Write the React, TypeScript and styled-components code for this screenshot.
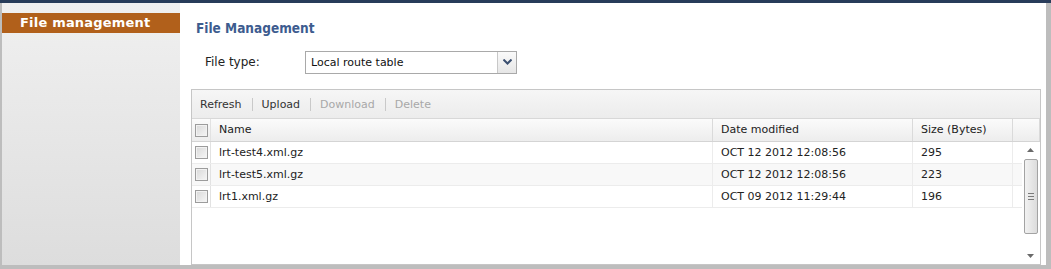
import React from "react";
import styled, { createGlobalStyle } from "styled-components";

const GlobalStyle = createGlobalStyle`
  html, body {
    margin: 0;
    padding: 0;
    background: #ffffff;
  }
  body {
    font-family: "DejaVu Sans", Verdana, sans-serif;
  }
`;

const Page = styled.div`
  width: 1051px;
  height: 269px;
  display: flex;
  flex-direction: column;
  background: #bdbdbd;
`;

const TopBar = styled.div`
  height: 3px;
  background: #283c5a;
  flex: none;
`;

const Body = styled.div`
  flex: 1;
  display: flex;
  margin: 0 5px 4px 2px;
  min-height: 0;
`;

const Sidebar = styled.div`
  width: 178px;
  flex: none;
  padding-top: 10px;
  background: linear-gradient(to bottom, #f0f0f0, #dddddd);
`;

const SideHeader = styled.div`
  height: 20px;
  line-height: 19px;
  padding-left: 18px;
  background: #b1601b;
  color: #ffffff;
  font-weight: bold;
  font-size: 13px;
  letter-spacing: 0.2px;
`;

const Main = styled.div`
  flex: 1;
  background: #ffffff;
  padding: 16px 5px 0 11px;
  display: flex;
  flex-direction: column;
  min-width: 0;
`;

const Title = styled.div`
  color: #3d5c8f;
  font-family: "DejaVu Sans Condensed", "DejaVu Sans", sans-serif;
  font-stretch: condensed;
  font-weight: bold;
  font-size: 13.5px;
  line-height: 18px;
  padding-left: 5px;
`;

const FormRow = styled.div`
  display: flex;
  align-items: center;
  margin-top: 14px;
  padding-left: 14px;
  height: 22px;
`;

const Label = styled.div`
  width: 100px;
  font-size: 12px;
  color: #222222;
`;

const Select = styled.div`
  width: 210px;
  height: 21px;
  border: 1px solid #a9a9a9;
  display: flex;
  background: #ffffff;
`;

const SelectValue = styled.div`
  flex: 1;
  font-size: 11px;
  line-height: 21px;
  padding-left: 5px;
  color: #111111;
`;

const SelectButton = styled.div`
  width: 18px;
  border-left: 1px solid #c8c8c8;
  background: linear-gradient(to bottom, #fafafa, #e6e6e6);
  display: flex;
  align-items: center;
  justify-content: center;
`;

const Grid = styled.div`
  margin-top: 16px;
  height: 174px;
  border: 1px solid #c6c6c6;
  display: flex;
  flex-direction: column;
  overflow: hidden;
`;

const Toolbar = styled.div`
  height: 28px;
  display: flex;
  align-items: center;
  padding-left: 8px;
  background: linear-gradient(to bottom, #f6f6f6, #ececec);
  border-bottom: 1px solid #d8d8d8;
  font-size: 11px;
`;

const ToolButton = styled.span<{ $disabled?: boolean }>`
  color: ${(p) => (p.$disabled ? "#a8a8a8" : "#333333")};
`;

const ToolSep = styled.span`
  width: 1px;
  height: 13px;
  background: #c9c9c9;
  margin: 0 9px 0 10px;
`;

const HeaderRow = styled.div`
  display: flex;
  height: 22px;
  background: linear-gradient(to bottom, #fbfbfb, #ededed);
  border-bottom: 1px solid #d4d4d4;
`;

const HeadCell = styled.div<{ $w?: number }>`
  ${(p) => (p.$w ? `width: ${p.$w}px; flex: none;` : "flex: 1;")}
  border-right: 1px solid #dadada;
  font-size: 11px;
  line-height: 22px;
  padding-left: 8px;
  color: #222222;
  box-sizing: border-box;
`;

const CheckCell = styled.div`
  width: 19px;
  flex: none;
  display: flex;
  align-items: center;
  justify-content: center;
  border-right: 1px solid #e2e2e2;
  box-sizing: border-box;
`;

const Content = styled.div`
  flex: 1;
  display: flex;
  min-height: 0;
`;

const Rows = styled.div`
  flex: 1;
`;

const Row = styled.div<{ $alt?: boolean }>`
  display: flex;
  height: 21px;
  border-bottom: 1px solid #ececec;
  background: ${(p) => (p.$alt ? "#f8f8f8" : "#ffffff")};
`;

const Cell = styled.div<{ $w: number }>`
  width: ${(p) => p.$w}px;
  flex: none;
  font-size: 11px;
  line-height: 21px;
  padding-left: 8px;
  color: #222222;
  border-right: 1px solid #ececec;
  box-sizing: border-box;
`;

const Check = styled.span`
  width: 11px;
  height: 11px;
  border: 1px solid #9c9c9c;
  background: linear-gradient(135deg, #d8d8d8, #f6f6f6);
  box-shadow: inset 0 0 0 1px #f2f2f2;
`;

const Scrollbar = styled.div`
  width: 17px;
  margin-right: 1px;
  display: flex;
  flex-direction: column;
  align-items: center;
  background: #ffffff;
`;

const Arrow = styled.div`
  height: 16px;
  display: flex;
  align-items: center;
  justify-content: center;
`;

const Thumb = styled.div`
  width: 14px;
  height: 75px;
  margin-top: 1px;
  border: 1px solid #a3a3a3;
  border-radius: 2px;
  background: linear-gradient(to right, #f2f2f2, #dcdcdc);
  display: flex;
  align-items: center;
  justify-content: center;
  box-sizing: border-box;
`;

const Spacer = styled.div`
  flex: 1;
`;

const files = [
  { name: "lrt-test4.xml.gz", date: "OCT 12 2012 12:08:56", size: "295" },
  { name: "lrt-test5.xml.gz", date: "OCT 12 2012 12:08:56", size: "223" },
  { name: "lrt1.xml.gz", date: "OCT 09 2012 11:29:44", size: "196" },
];

function Triangle({ up }: { up?: boolean }) {
  return (
    <svg width="7" height="4" viewBox="0 0 7 4">
      <path d={up ? "M0 4 L3.5 0 L7 4 Z" : "M0 0 L3.5 4 L7 0 Z"} fill="#6a6a6a" />
    </svg>
  );
}

export default function App() {
  return (
    <>
      <GlobalStyle />
      <Page>
        <TopBar />
        <Body>
          <Sidebar>
            <SideHeader>File management</SideHeader>
          </Sidebar>
          <Main>
            <Title>File Management</Title>
            <FormRow>
              <Label>File type:</Label>
              <Select>
                <SelectValue>Local route table</SelectValue>
                <SelectButton>
                  <svg width="9" height="6" viewBox="0 0 9 6">
                    <path d="M0.5 0.5 L4.5 4.5 L8.5 0.5" stroke="#3b4f70" strokeWidth="2" fill="none" />
                  </svg>
                </SelectButton>
              </Select>
            </FormRow>
            <Grid>
              <Toolbar>
                <ToolButton>Refresh</ToolButton>
                <ToolSep />
                <ToolButton>Upload</ToolButton>
                <ToolSep />
                <ToolButton $disabled>Download</ToolButton>
                <ToolSep />
                <ToolButton $disabled>Delete</ToolButton>
              </Toolbar>
              <HeaderRow>
                <CheckCell>
                  <Check />
                </CheckCell>
                <HeadCell $w={502}>Name</HeadCell>
                <HeadCell $w={200}>Date modified</HeadCell>
                <HeadCell $w={100}>Size (Bytes)</HeadCell>
                <HeadCell />
              </HeaderRow>
              <Content>
                <Rows>
                  {files.map((f, i) => (
                    <Row key={f.name} $alt={i === 1}>
                      <CheckCell>
                        <Check />
                      </CheckCell>
                      <Cell $w={502}>{f.name}</Cell>
                      <Cell $w={200}>{f.date}</Cell>
                      <Cell $w={100}>{f.size}</Cell>
                    </Row>
                  ))}
                </Rows>
                <Scrollbar>
                  <Arrow>
                    <Triangle up />
                  </Arrow>
                  <Thumb>
                    <svg width="6" height="7" viewBox="0 0 6 7">
                      <path d="M0 0.5 H6 M0 3.5 H6 M0 6.5 H6" stroke="#7a7a7a" strokeWidth="1" />
                    </svg>
                  </Thumb>
                  <Spacer />
                  <Arrow>
                    <Triangle />
                  </Arrow>
                </Scrollbar>
              </Content>
            </Grid>
          </Main>
        </Body>
      </Page>
    </>
  );
}
